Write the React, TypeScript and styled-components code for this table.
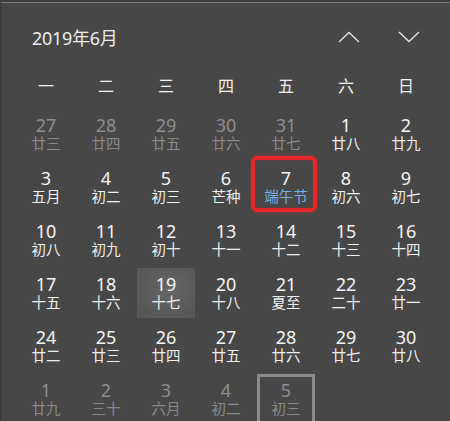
import React, { FC } from "react";
import styled, { createGlobalStyle } from "styled-components";

const GlobalStyle = createGlobalStyle`
  html, body {
    margin: 0;
    padding: 0;
    background: #3d3d3d;
  }
  body {
    font-family: "Noto Sans", "Noto Sans CJK SC", sans-serif;
    -webkit-font-smoothing: antialiased;
  }
`;

type DayObj = {
    day: number;
    lunar: string;
    dim?: boolean;
    holiday?: boolean;
    hover?: boolean;
    today?: boolean;
    marked?: boolean;
    hidden?: boolean;
};

const Panel = styled.div`
    box-sizing: border-box;
    width: 450px;
    height: 419px;
    margin-top: 2px;
    background: #474747;
    border-top: 1px solid #7e7e7e;
    border-left: 2px solid #3e3e3e;
    overflow: hidden;
`;

const Header = styled.div`
    display: flex;
    align-items: center;
    height: 68px;
    padding-left: 30px;
    padding-right: 11px;
`;

const Title = styled.div`
    flex: 1;
    color: #ededed;
    font-size: 18px;
    letter-spacing: -0.3px;
`;

const NavButton = styled.button`
    width: 60px;
    height: 40px;
    border: none;
    background: transparent;
    padding: 0;
    display: flex;
    align-items: center;
    justify-content: center;
    cursor: pointer;
`;

const Grid = styled.div`
    display: grid;
    grid-template-columns: repeat(7, 58px);
    column-gap: 2px;
    padding-left: 15px;
`;

const WeekDay = styled.div`
    height: 28px;
    display: flex;
    align-items: center;
    justify-content: center;
    color: #f0f0f0;
    font-size: 16px;
    margin-bottom: 10px;
`;

const Cell = styled.div<{ $hover?: boolean; $today?: boolean }>`
    position: relative;
    box-sizing: border-box;
    height: 50px;
    margin-bottom: 3px;
    display: flex;
    flex-direction: column;
    align-items: center;
    justify-content: center;
    border: 3px solid ${p => (p.$today ? "#8b8b8b" : "transparent")};
    background: ${p =>
        p.$hover
            ? "radial-gradient(ellipse at 55% 40%, #676767 0%, #5c5c5c 55%, #545454 100%)"
            : "transparent"};
`;

const DayNum = styled.div<{ $dim?: boolean }>`
    font-size: 18px;
    line-height: 18px;
    height: 18px;
    color: ${p => (p.$dim ? "#8e8e8e" : "#f4f4f4")};
`;

const Lunar = styled.div<{ $dim?: boolean; $holiday?: boolean }>`
    font-family: "Noto Sans CJK SC", sans-serif;
    font-size: 14.5px;
    line-height: 18px;
    height: 18px;
    color: ${p => (p.$holiday ? "#78ade0" : p.$dim ? "#8a8a8a" : "#efefef")};
`;

const Mark = styled.div`
    position: absolute;
    left: -9px;
    top: -9px;
    width: 66px;
    height: 56px;
    box-sizing: border-box;
    border: 4px solid #e3262a;
    border-radius: 6px;
    box-shadow: 0 0 3px rgba(230, 40, 40, 0.6), inset 0 0 2px rgba(230, 40, 40, 0.5);
`;

const Chevron: FC<{ up?: boolean }> = ({ up }) => (
    <svg width="22" height="12" viewBox="0 0 22 12">
        <polyline
            points={up ? "1,11 11,1.5 21,11" : "1,1 11,10.5 21,1"}
            fill="none"
            stroke="#e6e6e6"
            strokeWidth="1.3"
        />
    </svg>
);

const weekDays = ["一", "二", "三", "四", "五", "六", "日"];

const days: DayObj[] = [
    { day: 27, lunar: "廿三", dim: true },
    { day: 28, lunar: "廿四", dim: true },
    { day: 29, lunar: "廿五", dim: true },
    { day: 30, lunar: "廿六", dim: true },
    { day: 31, lunar: "廿七", dim: true },
    { day: 1, lunar: "廿八" },
    { day: 2, lunar: "廿九" },
    { day: 3, lunar: "五月" },
    { day: 4, lunar: "初二" },
    { day: 5, lunar: "初三" },
    { day: 6, lunar: "芒种" },
    { day: 7, lunar: "端午节", holiday: true, marked: true },
    { day: 8, lunar: "初六" },
    { day: 9, lunar: "初七" },
    { day: 10, lunar: "初八" },
    { day: 11, lunar: "初九" },
    { day: 12, lunar: "初十" },
    { day: 13, lunar: "十一" },
    { day: 14, lunar: "十二" },
    { day: 15, lunar: "十三" },
    { day: 16, lunar: "十四" },
    { day: 17, lunar: "十五" },
    { day: 18, lunar: "十六" },
    { day: 19, lunar: "十七", hover: true },
    { day: 20, lunar: "十八" },
    { day: 21, lunar: "夏至" },
    { day: 22, lunar: "二十" },
    { day: 23, lunar: "廿一" },
    { day: 24, lunar: "廿二" },
    { day: 25, lunar: "廿三" },
    { day: 26, lunar: "廿四" },
    { day: 27, lunar: "廿五" },
    { day: 28, lunar: "廿六" },
    { day: 29, lunar: "廿七" },
    { day: 30, lunar: "廿八" },
    { day: 1, lunar: "廿九", dim: true },
    { day: 2, lunar: "三十", dim: true },
    { day: 3, lunar: "六月", dim: true },
    { day: 4, lunar: "初二", dim: true },
    { day: 5, lunar: "初三", dim: true, today: true },
    { day: 6, lunar: "初四", dim: true, hidden: true },
    { day: 7, lunar: "初五", dim: true, hidden: true },
];

const App: FC = () => {
    return (
        <>
            <GlobalStyle />
            <Panel>
                <Header>
                    <Title>2019年6月</Title>
                    <NavButton aria-label="上一月">
                        <Chevron up />
                    </NavButton>
                    <NavButton aria-label="下一月">
                        <Chevron />
                    </NavButton>
                </Header>
                <Grid>
                    {weekDays.map(w => (
                        <WeekDay key={w}>{w}</WeekDay>
                    ))}
                    {days.map((d, index) => (
                        <Cell key={index} $hover={d.hover} $today={d.today}>
                            {!d.hidden && (
                                <>
                                    <DayNum $dim={d.dim}>{d.day}</DayNum>
                                    <Lunar $dim={d.dim} $holiday={d.holiday}>{d.lunar}</Lunar>
                                </>
                            )}
                            {d.marked && <Mark />}
                        </Cell>
                    ))}
                </Grid>
            </Panel>
        </>
    );
};

export default App;
